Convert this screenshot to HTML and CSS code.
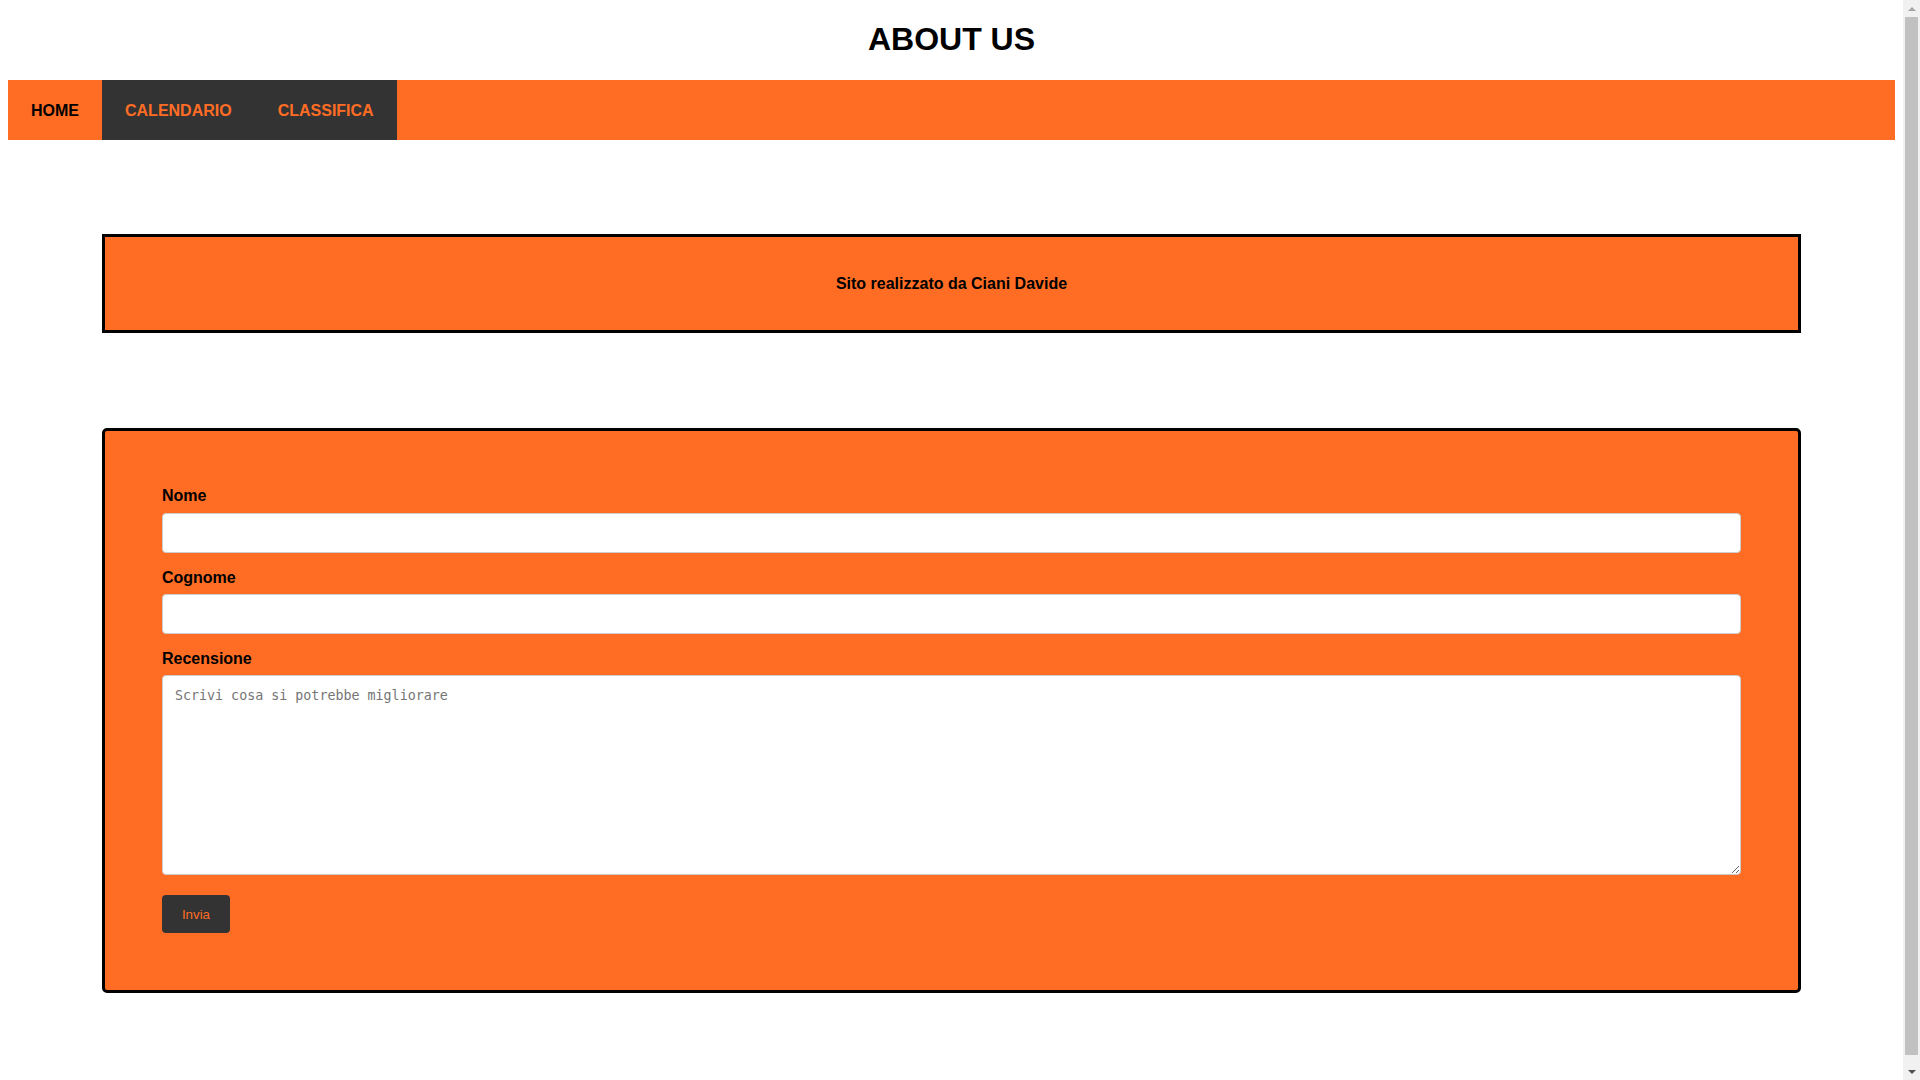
FILE: index.html
```html
<!DOCTYPE html>
<html lang="it">
<head>
<meta charset="utf-8">
<title>About us</title>
<link rel="stylesheet" href="styles.css">
</head>
<body>
<h1 class="title">ABOUT US</h1>
<nav class="nav">
  <a class="nav-link active" href="#">HOME</a>
  <div class="nav-group">
    <a class="nav-link" href="#">CALENDARIO</a>
    <a class="nav-link" href="#">CLASSIFICA</a>
  </div>
</nav>
<section class="credits">
  <p class="credits-text">Sito realizzato da Ciani Davide</p>
</section>
<section class="review">
  <form class="review-form">
    <label class="field-label" for="nome">Nome</label>
    <input class="field-input" type="text" id="nome">
    <label class="field-label" for="cognome">Cognome</label>
    <input class="field-input" type="text" id="cognome">
    <label class="field-label" for="recensione">Recensione</label>
    <textarea class="field-area" id="recensione" placeholder="Scrivi cosa si potrebbe migliorare"></textarea>
    <button class="submit" type="button">Invia</button>
  </form>
</section>
<div class="scrollbar" aria-hidden="true">
  <div class="scroll-btn scroll-up"><span class="arrow-up"></span></div>
  <div class="scroll-track"><div class="scroll-thumb"></div></div>
  <div class="scroll-btn scroll-down"><span class="arrow-down"></span></div>
</div>
</body>
</html>
```
FILE: styles.css
```css
html {
  background: #ffffff;
  padding-right: 17px;
}
body {
  margin: 0;
  padding: 0 8px 8px 8px;
  font-family: "Liberation Sans", Arial, sans-serif;
  color: #000;
}
.title {
  font-size: 32px;
  font-weight: bold;
  text-align: center;
  margin: 21.44px 0;
}
.nav {
  display: flex;
  height: 60px;
  background: #ff6d25;
}
.nav-group {
  display: flex;
  background: #333333;
}
.nav-link {
  display: flex;
  align-items: center;
  padding: 2px 23px 0 23px;
  font-size: 16px;
  font-weight: bold;
  color: #ff6d25;
  text-decoration: none;
}
.nav-link.active {
  color: #000;
  background: #ff6d25;
}
.credits {
  width: 90%;
  margin: 5% auto;
  background: #ff6d25;
  border: 3px solid #000;
  box-sizing: border-box;
  height: 99px;
  display: flex;
  align-items: center;
  justify-content: center;
}
.credits-text {
  margin: 0;
  font-size: 16px;
  font-weight: bold;
}
.review {
  width: 90%;
  margin: 5% auto;
  background: #ff6d25;
  border: 3px solid #000;
  border-radius: 5px;
  padding: 3%;
  box-sizing: border-box;
}
.review-form {
  display: flex;
  flex-direction: column;
  align-items: flex-start;
}
.field-label {
  font-size: 16px;
  font-weight: bold;
  line-height: 18.4px;
  margin-bottom: 7px;
}
.field-input,
.field-area {
  width: 100%;
  box-sizing: border-box;
  border: 1px solid #cccccc;
  border-radius: 4px;
  background: #fff;
  margin: 0 0 16px 0;
}
.field-input {
  height: 40px;
  padding: 0 12px;
}
.field-area {
  height: 200px;
  padding: 12px;
  font-family: "DejaVu Sans Mono", "Liberation Mono", monospace;
  font-size: 13.33px;
  resize: vertical;
  margin-bottom: 20px;
}
.field-area::placeholder {
  color: #757575;
}
.submit {
  width: 68px;
  height: 38px;
  background: #333333;
  color: #ff6d25;
  border: none;
  border-radius: 4px;
  font-family: "Liberation Sans", Arial, sans-serif;
  font-size: 13.33px;
  padding: 0;
}

/* drawn scrollbar overlay */
.scrollbar {
  position: fixed;
  top: 0;
  right: 0;
  width: 17px;
  height: 100vh;
  background: #f1f1f1;
  display: flex;
  flex-direction: column;
}
.scroll-btn {
  height: 17px;
  display: flex;
  align-items: center;
  justify-content: center;
}
.arrow-up {
  width: 0;
  height: 0;
  border-left: 4px solid transparent;
  border-right: 4px solid transparent;
  border-bottom: 4px solid #a3a3a3;
}
.arrow-down {
  width: 0;
  height: 0;
  border-left: 4px solid transparent;
  border-right: 4px solid transparent;
  border-top: 4px solid #505050;
}
.scroll-track {
  flex: 1;
  padding: 0 2px 8px 2px;
  display: flex;
}
.scroll-thumb {
  flex: 1;
  background: #c1c1c1;
}
```
